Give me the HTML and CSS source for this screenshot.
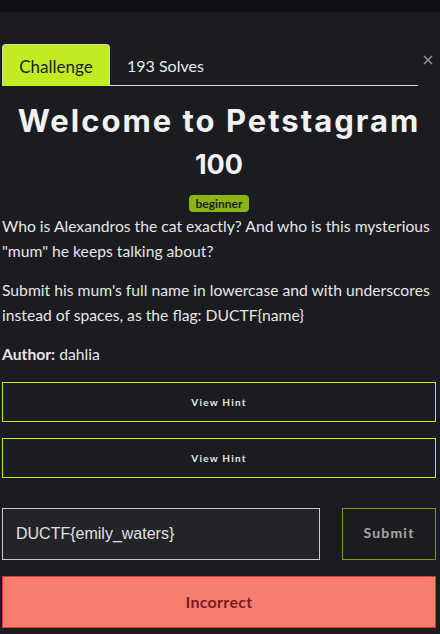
FILE: index.html
```html
<!DOCTYPE html>
<html>
<head>
<meta charset="utf-8">
<link rel="stylesheet" href="styles.css">
</head>
<body>
<div class="topbar"></div>
<div class="modal">
  <div class="tabrow">
    <div class="tabs">
      <div class="tab active">Challenge</div>
      <div class="tab">193 Solves</div>
    </div>
    <div class="close">
      <svg width="10" height="10" viewBox="0 0 10 10"><path d="M1 1L9 9M9 1L1 9" stroke="#8e9094" stroke-width="1.5" fill="none"/></svg>
    </div>
  </div>
  <h1 class="title">Welcome to Petstagram</h1>
  <div class="points">100</div>
  <div class="badge-row"><span class="badge">beginner</span></div>
  <div class="desc">
    <p>Who is Alexandros the cat exactly? And who is this mysterious "mum" he keeps talking about?</p>
    <p>Submit his mum's full name in lowercase and with underscores instead of spaces, as the flag: DUCTF{name}</p>
    <p><b>Author:</b> dahlia</p>
  </div>
  <div class="hints">
    <button class="hint">View Hint</button>
    <button class="hint">View Hint</button>
  </div>
  <div class="submit-row">
    <div class="input">DUCTF{emily_waters}</div>
    <button class="submit">Submit</button>
  </div>
  <div class="result">Incorrect</div>
</div>
</body>
</html>
```
FILE: styles.css
```css
html, body {
  margin: 0;
  padding: 0;
  background: #1a1c20;
  height: 100%;
}
body {
  font-family: "Lato", "Noto Sans", sans-serif;
  color: #e8e8e8;
}
.topbar {
  height: 12px;
  background: #0e1014;
}
.modal {
  padding: 32px 4px 0 2px;
}
.tabrow {
  display: flex;
  align-items: flex-end;
}
.tabs {
  display: flex;
  width: 418px;
  border-bottom: 1px solid #d8d8d8;
  height: 42px;
  box-sizing: border-box;
}
.tab {
  font-family: "Lato", sans-serif;
  font-size: 16px;
  color: #eaeaea;
  display: flex;
  align-items: center;
  padding: 2px 17px 0 17px;
}
.tab.active {
  width: 108px;
  box-sizing: border-box;
  justify-content: center;
  padding: 2px 0 0 0;
  font-size: 17px;
  background: #c2ec22;
  color: #1b1d1f;
  border: 1px solid #cfd6c0;
  border-bottom: none;
  border-radius: 4px 4px 0 0;
  margin-bottom: -1px;
}
.close {
  width: 16px;
  height: 42px;
  display: flex;
  justify-content: center;
  padding-top: 11px;
  box-sizing: border-box;
  margin-left: 2px;
}
.title {
  margin: 13px 0 0 0;
  text-align: center;
  font-family: "Inter", sans-serif;
  font-weight: 700;
  font-size: 31px;
  letter-spacing: 2px;
  line-height: 44px;
  color: #f2f2f2;
}
.points {
  text-align: center;
  font-family: "Inter", sans-serif;
  font-weight: 700;
  font-size: 27px;
  line-height: 40px;
  margin-top: 2px;
  color: #f2f2f2;
}
.badge-row {
  text-align: center;
  margin-top: 8px;
  line-height: 17px;
  height: 17px;
}
.badge {
  display: inline-block;
  background: #8cb416;
  color: #1c1e16;
  font-family: "Lato", sans-serif;
  font-weight: 700;
  font-size: 12px;
  line-height: 17px;
  padding: 0 6px;
  border-radius: 4px;
}
.desc {
  margin-top: 4px;
  font-size: 15.7px;
  line-height: 25px;
  color: #e6e6e6;
}
.desc p {
  margin: 0 0 14px 0;
}
.desc b {
  font-weight: 700;
}
.hints {
  display: flex;
  flex-direction: column;
  gap: 16px;
  margin-top: 15px;
}
.hint {
  height: 40px;
  background: transparent;
  border: 1px solid #c5f000;
  color: #e6e6e6;
  font-family: "Lato", sans-serif;
  font-weight: 700;
  font-size: 10px;
  letter-spacing: 1.2px;
  padding: 0 0 0 0;
}
.submit-row {
  display: flex;
  gap: 22px;
  margin-top: 30px;
}
.input {
  width: 318px;
  height: 52px;
  box-sizing: border-box;
  border: 1px solid #c8c8c8;
  background: #232427;
  font-family: "Liberation Sans", Arial, sans-serif;
  font-size: 16px;
  color: #e0e0e0;
  display: flex;
  align-items: center;
  padding-left: 13px;
}
.submit {
  width: 94px;
  height: 52px;
  background: transparent;
  border: 1px solid #7a9c12;
  color: #a8a8a8;
  font-family: "Lato", sans-serif;
  font-weight: 700;
  font-size: 14px;
  letter-spacing: 1.2px;
  padding: 0 0 3px 0;
}
.result {
  margin-top: 16px;
  height: 52px;
  box-sizing: border-box;
  background: #f67e70;
  border: 1px solid #e23a25;
  color: #7a1c22;
  font-family: "Lato", sans-serif;
  font-weight: 700;
  font-size: 16px;
  display: flex;
  align-items: center;
  justify-content: center;
  letter-spacing: 0.3px;
  padding-bottom: 2px;
}
```
